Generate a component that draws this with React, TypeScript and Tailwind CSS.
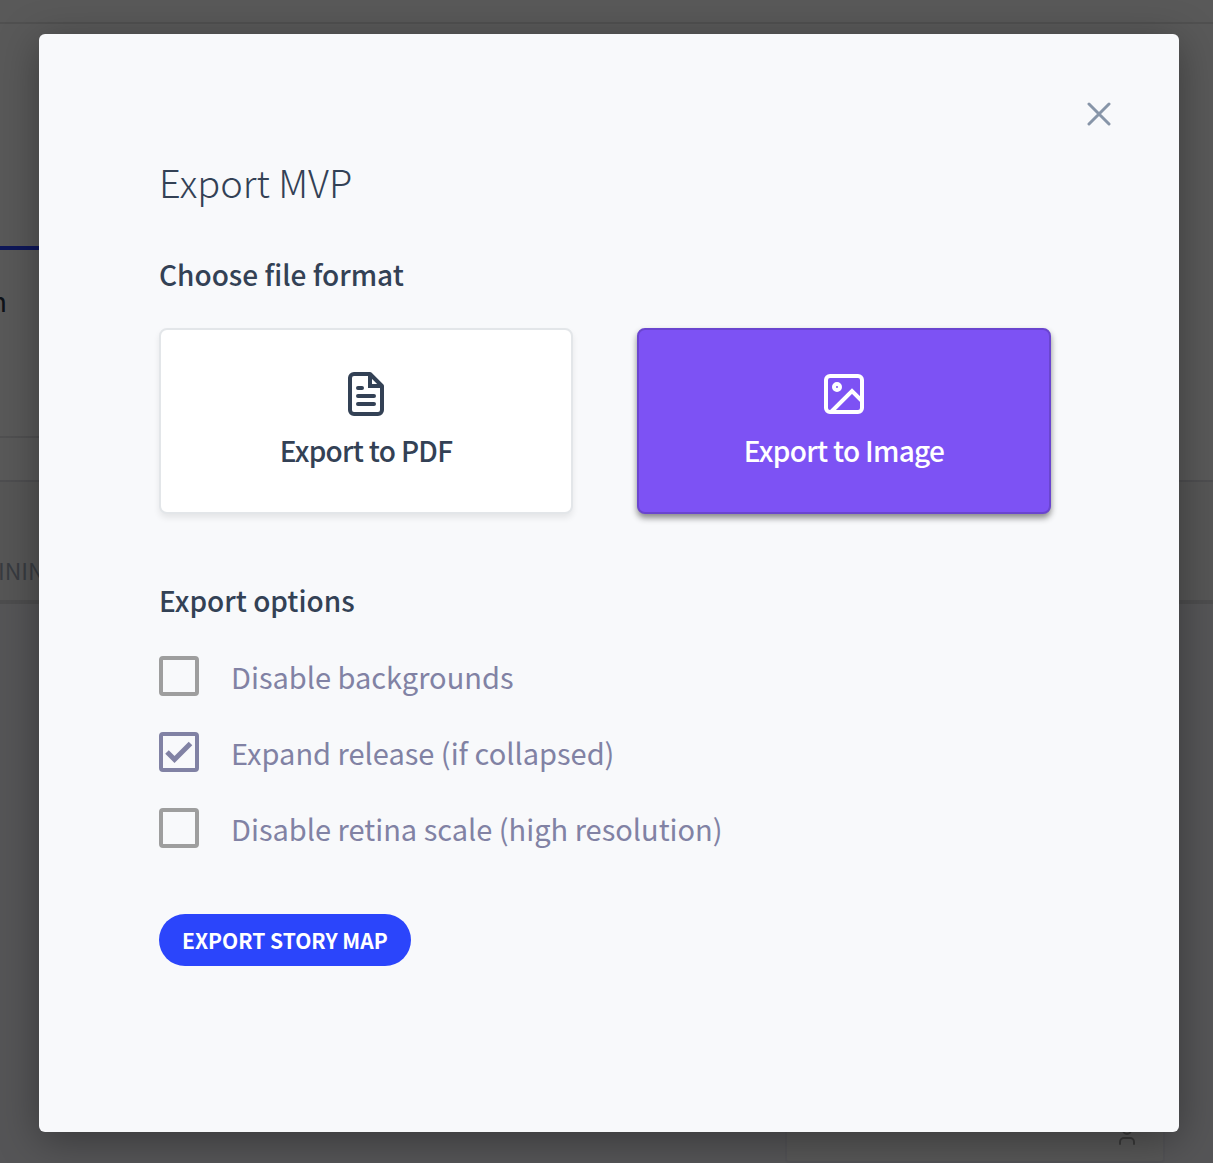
import React, { useState } from 'react'

const formats = [
  { id: 'pdf', label: 'Export to PDF', icon: PdfIcon },
  { id: 'image', label: 'Export to Image', icon: ImageIcon },
]

const exportOptions = [
  { id: 'backgrounds', label: 'Disable backgrounds' },
  { id: 'expand', label: 'Expand release (if collapsed)' },
  { id: 'retina', label: 'Disable retina scale (high resolution)' },
]

function PdfIcon() {
  return (
    <svg width="48" height="48" viewBox="0 0 48 48" fill="none" stroke="currentColor" strokeWidth="4" strokeLinecap="round" aria-hidden="true">
      <path d="M28 4H12a4 4 0 0 0-4 4v32a4 4 0 0 0 4 4h24a4 4 0 0 0 4-4V16L28 4Z" strokeLinejoin="round" />
      <path d="M28 4v12h12" strokeLinecap="butt" />
      <path d="M16 18h4M16 26h16M16 34h16" />
    </svg>
  )
}

function ImageIcon() {
  return (
    <svg width="48" height="48" viewBox="0 0 48 48" fill="none" stroke="currentColor" strokeWidth="4" aria-hidden="true">
      <rect x="6" y="6" width="36" height="36" rx="4" />
      <circle cx="17" cy="17" r="3" />
      <path d="M11 42 32 21l10 10" />
    </svg>
  )
}

// Story map page that sits under the dialog
function StoryMapPage() {
  return (
    <div className="flex min-h-screen flex-col bg-white" aria-hidden="true">
      <div className="h-6 border-b-2 border-[#e4e4e4]" />
      <div className="h-[458px] border-b-2 border-[#e0e0e4]">
        <div className="w-1/2">
          <div className="h-[226px] border-b-4 border-[#2a44ff]" />
          <div className="h-[188px] overflow-hidden border-b-2 border-[#e6e6e8] pt-[30px]">
            <div className="-ml-2.5 text-[28px] leading-10 text-[#2d3748]">n</div>
          </div>
        </div>
      </div>
      <div className="h-[122px] overflow-hidden border-b-4 border-[#dcdce0] bg-[#f5f5f7] pt-[72px]">
        <div className="-ml-0.5 text-[23px] leading-8 text-[#a0aab8]">INING</div>
      </div>
      <div className="flex flex-1 flex-col justify-end bg-[#f3f3f8] pr-12">
        <div className="flex h-16 w-[380px] items-start justify-end self-end rounded-b border-2 border-t-0 border-[#ececf2] bg-[#fafafa] px-6 pt-6">
          <svg width="24" height="24" viewBox="0 0 24 24" fill="none" stroke="#a4a4a4" strokeWidth="2" strokeLinecap="round">
            <circle cx="12" cy="7" r="4" />
            <path d="M5 21v-2a4 4 0 0 1 4-4h6a4 4 0 0 1 4 4v2" />
          </svg>
        </div>
      </div>
    </div>
  )
}

export default function App() {
  const [format, setFormat] = useState('image')
  const [checked, setChecked] = useState<string[]>(['expand'])

  const toggle = (id: string) => {
    setChecked(checked.includes(id) ? checked.filter((c) => c !== id) : [...checked, id])
  }

  return (
    <div className="relative min-h-screen overflow-hidden font-['Noto_Sans_CJK_SC','Open_Sans',sans-serif]">
      <StoryMapPage />

      <div className="absolute inset-0 flex bg-black/65 pt-[34px] pr-[34px] pb-[31px] pl-[39px]">
        <div
          role="dialog"
          aria-labelledby="export-title"
          className="flex-1 rounded-md bg-[#f8f9fb] pb-24 shadow-[0_8px_40px_rgba(0,0,0,0.35)]"
        >
          <div className="flex justify-end pt-14 pr-14">
            <button type="button" aria-label="Close" className="flex size-12 items-center justify-center text-[#8795a8]">
              <svg width="24" height="24" viewBox="0 0 24 24" fill="none" stroke="currentColor" strokeWidth="3" strokeLinecap="round">
                <path d="m2 2 20 20M22 2 2 22" />
              </svg>
            </button>
          </div>

          <div className="pr-32 pl-[120px] text-[#334155]">
            <h1 id="export-title" className="pt-[14px] text-[38px] leading-[60px] font-light">Export MVP</h1>

            <h2 className="mt-[42px] text-[28px] leading-10 font-medium">Choose file format</h2>
            <div className="mt-[34px] grid grid-cols-2 gap-16">
              {formats.map((item) => {
                const Icon = item.icon
                const isActive = format === item.id

                return (
                  <button
                    key={item.id}
                    type="button"
                    aria-pressed={isActive}
                    onClick={() => setFormat(item.id)}
                    className={`flex h-[186px] flex-col items-center justify-center rounded-lg border-2 pb-0.5 ${
                      isActive
                        ? 'border-[#6a45cf] bg-[#7d52f4] text-white shadow-[0_4px_6px_rgba(0,0,0,0.45)]'
                        : 'border-[#e3e6e9] bg-white shadow-[0_4px_6px_rgba(0,0,0,0.08)]'
                    }`}
                  >
                    <Icon />
                    <span className="mt-3 text-[28px] leading-10 font-medium tracking-tight">{item.label}</span>
                  </button>
                )
              })}
            </div>

            <h2 className="mt-[66px] text-[28px] leading-10 font-medium">Export options</h2>
            <div className="mt-9 flex flex-col items-start gap-9">
              {exportOptions.map((option) => (
                <label key={option.id} className="flex items-center gap-8 text-[29px] leading-10 text-[#8182a4]">
                  <span className="grid size-10 place-items-center">
                    <input
                      type="checkbox"
                      checked={checked.includes(option.id)}
                      onChange={() => toggle(option.id)}
                      className="peer col-start-1 row-start-1 size-10 appearance-none rounded border-4 border-[#9e9e9e] checked:border-[#8182a4]"
                    />
                    <svg className="pointer-events-none invisible col-start-1 row-start-1 peer-checked:visible" width="40" height="40" viewBox="0 0 40 40" fill="none" stroke="currentColor" strokeWidth="5" aria-hidden="true">
                      <path d="m8 20 7.5 7.5 16-16" />
                    </svg>
                  </span>
                  {option.label}
                </label>
              ))}
            </div>

            <button type="button" className="mt-[66px] h-[52px] rounded-full bg-[#2b45fb] px-[23px] text-[21px] leading-7 font-bold text-white">
              EXPORT STORY MAP
            </button>
          </div>
        </div>
      </div>
    </div>
  )
}
